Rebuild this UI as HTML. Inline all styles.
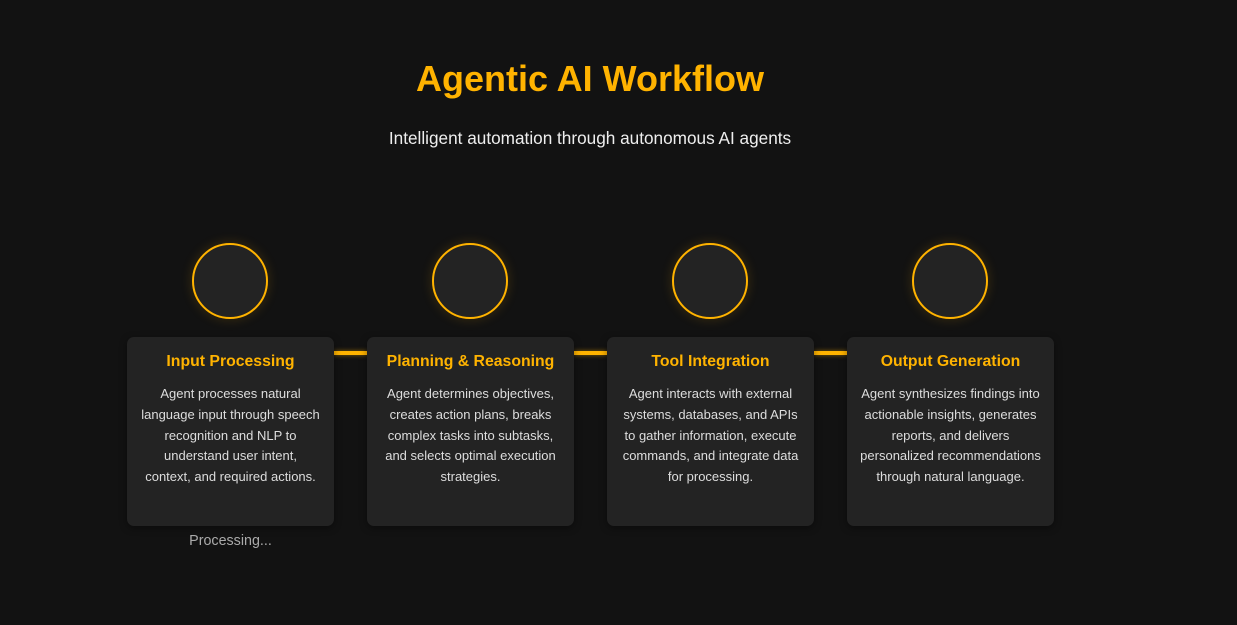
<!DOCTYPE html>
<html><head><style>
body{margin:0;background:#121212;width:1237px;height:625px;overflow:hidden;font-family:"Liberation Sans",sans-serif;position:relative}
h1{position:absolute;left:0;width:1180px;top:58px;margin:0;text-align:center;color:#ffb300;font-size:36px;font-weight:bold}
.sub{position:absolute;left:0;width:1180px;top:128px;text-align:center;color:#eee;font-size:17.2px}
.c{position:absolute;top:243px;width:72px;height:72px;border:2px solid #ffb300;border-radius:50%;background:#232323;box-shadow:0 0 12px rgba(255,179,0,.18)}
.card{position:absolute;top:337px;width:207px;height:189px;background:#232323;border-radius:7px;text-align:center;box-shadow:0 2px 8px rgba(0,0,0,.4)}
.card h3{margin:16px 0 0;color:#ffb300;font-size:15.8px;font-weight:bold}
.card p{margin:13px 0 0;color:#ddd;font-size:13px;line-height:20.8px;white-space:nowrap}
.ln{position:absolute;top:351px;height:4px;width:33px;background:#ffb300;box-shadow:0 0 5px rgba(255,179,0,.5)}
.pr{position:absolute;top:533px;left:127px;width:207px;text-align:center;color:#aaa;font-size:14.3px}
</style></head><body>
<h1>Agentic AI Workflow</h1>
<div class="sub">Intelligent automation through autonomous AI agents</div>
<div class="c" style="left:192px"></div><div class="c" style="left:432px"></div><div class="c" style="left:672px"></div><div class="c" style="left:912px"></div>
<div class="ln" style="left:334px"></div><div class="ln" style="left:574px"></div><div class="ln" style="left:814px"></div>
<div class="card" style="left:127px"><h3>Input Processing</h3><p>Agent processes natural<br>language input through speech<br>recognition and NLP to<br>understand user intent,<br>context, and required actions.</p></div>
<div class="card" style="left:367px"><h3>Planning &amp; Reasoning</h3><p>Agent determines objectives,<br>creates action plans, breaks<br>complex tasks into subtasks,<br>and selects optimal execution<br>strategies.</p></div>
<div class="card" style="left:607px"><h3>Tool Integration</h3><p>Agent interacts with external<br>systems, databases, and APIs<br>to gather information, execute<br>commands, and integrate data<br>for processing.</p></div>
<div class="card" style="left:847px"><h3>Output Generation</h3><p>Agent synthesizes findings into<br>actionable insights, generates<br>reports, and delivers<br>personalized recommendations<br>through natural language.</p></div>
<div class="pr">Processing...</div>
</body></html>
